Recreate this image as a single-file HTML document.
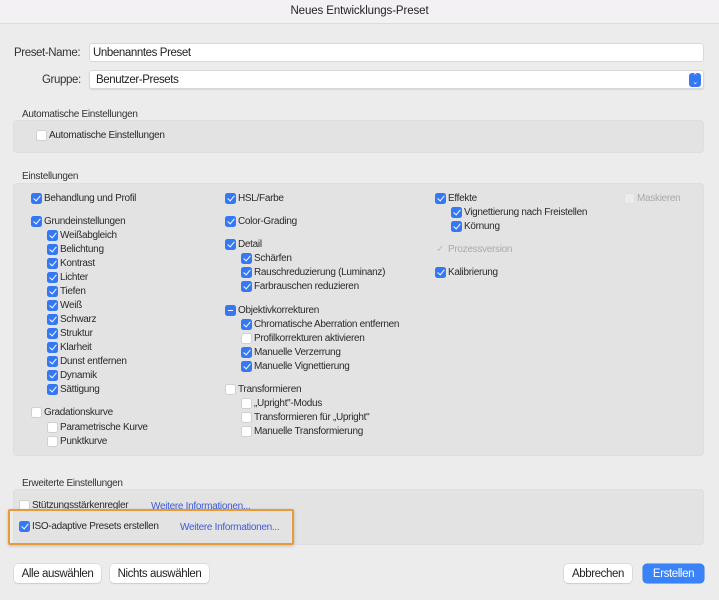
<!DOCTYPE html>
<html><head><meta charset="utf-8"><style>
*{box-sizing:border-box;margin:0;padding:0}
body{width:719px;height:600px;background:#ececec;font-family:"Liberation Sans",sans-serif;font-size:10px;letter-spacing:-0.3px;color:#222;position:relative;overflow:hidden}
.tb{position:absolute;left:0;top:0;width:719px;height:24px;background:#f4f1f4;border-bottom:1px solid #dcdcdc;text-align:center;line-height:23px;font-size:11.5px;letter-spacing:-0.1px;color:#222}
.lbl{position:absolute;font-size:11.5px;letter-spacing:-0.4px;color:#333}
.inp{position:absolute;left:89px;width:615px;height:19px;background:#fff;border:1px solid #d8d8d8;border-radius:3px;font-size:11.5px;letter-spacing:-0.4px;line-height:18px;padding-left:3px;color:#222}
.sec{position:absolute;left:22px;font-size:10px;color:#333}
.pan{position:absolute;left:13px;width:691px;background:#e3e3e3;border:1px solid #dedede;border-radius:4px}
.i{position:absolute;height:16px;line-height:16px;padding-left:13px;white-space:nowrap;color:#2a2a2a}
.i .c{position:absolute;left:0;top:1.5px;width:11px;height:11px;border-radius:2.5px;background:#fff;border:1px solid #d0d0d0}
.i .c.k{background:#3478f6;border-color:#3478f6}
.i .c.k::after{content:"";position:absolute;left:3px;top:0px;width:3px;height:6px;border:solid #fff;border-width:0 1.6px 1.6px 0;transform:rotate(40deg)}
.i .c.m{background:#3478f6;border-color:#3478f6}
.i .c.m::after{content:"";position:absolute;left:2px;top:4px;width:5px;height:1.6px;background:#fff}
.dis{color:#aaa}
.lk{position:absolute;color:#3b5bdb;font-size:10px}
.btn{position:absolute;top:564px;height:19px;background:#fff;border-radius:4px;box-shadow:0 0 0 .5px #c8c8c8,0 1px 1px rgba(0,0,0,.12);font-size:11.5px;letter-spacing:-0.4px;line-height:20px;text-align:center;color:#222}
</style></head><body>
<div class="tb">Neues Entwicklungs-Preset</div>
<div class="lbl" style="left:14px;top:47px">Preset-Name:</div>
<div class="inp" style="top:43px">Unbenanntes Preset</div>
<div class="lbl" style="left:42px;top:74px">Gruppe:</div>
<div class="inp" style="top:70px;box-shadow:0 1px 1px rgba(0,0,0,.1);padding-left:6px">Benutzer-Presets
<div style="position:absolute;right:2px;top:2px;width:12px;height:14px;background:#3478f6;border-radius:3px;color:#fff;font-size:7px;line-height:6px;text-align:center;padding-top:1px">&#8963;<br>&#8964;</div></div>

<div class="sec" style="top:109px">Automatische Einstellungen</div>
<div class="pan" style="top:120px;height:33px"></div>
<div class="i" style="left:36px;top:128px"><span class="c"></span>Automatische Einstellungen</div>

<div class="sec" style="top:171px">Einstellungen</div>
<div class="pan" style="top:183px;height:273px"></div>

<div class="i" style="left:31px;top:191px"><span class="c k"></span>Behandlung und Profil</div>
<div class="i" style="left:31px;top:214px"><span class="c k"></span>Grundeinstellungen</div>
<div class="i" style="left:47px;top:228px"><span class="c k"></span>Weißabgleich</div>
<div class="i" style="left:47px;top:242px"><span class="c k"></span>Belichtung</div>
<div class="i" style="left:47px;top:256px"><span class="c k"></span>Kontrast</div>
<div class="i" style="left:47px;top:270px"><span class="c k"></span>Lichter</div>
<div class="i" style="left:47px;top:284px"><span class="c k"></span>Tiefen</div>
<div class="i" style="left:47px;top:298px"><span class="c k"></span>Weiß</div>
<div class="i" style="left:47px;top:312px"><span class="c k"></span>Schwarz</div>
<div class="i" style="left:47px;top:326px"><span class="c k"></span>Struktur</div>
<div class="i" style="left:47px;top:340px"><span class="c k"></span>Klarheit</div>
<div class="i" style="left:47px;top:354px"><span class="c k"></span>Dunst entfernen</div>
<div class="i" style="left:47px;top:368px"><span class="c k"></span>Dynamik</div>
<div class="i" style="left:47px;top:382px"><span class="c k"></span>Sättigung</div>
<div class="i" style="left:31px;top:405px"><span class="c"></span>Gradationskurve</div>
<div class="i" style="left:47px;top:420px"><span class="c"></span>Parametrische Kurve</div>
<div class="i" style="left:47px;top:434px"><span class="c"></span>Punktkurve</div>

<div class="i" style="left:225px;top:191px"><span class="c k"></span>HSL/Farbe</div>
<div class="i" style="left:225px;top:214px"><span class="c k"></span>Color-Grading</div>
<div class="i" style="left:225px;top:237px"><span class="c k"></span>Detail</div>
<div class="i" style="left:241px;top:251px"><span class="c k"></span>Schärfen</div>
<div class="i" style="left:241px;top:265px"><span class="c k"></span>Rauschreduzierung (Luminanz)</div>
<div class="i" style="left:241px;top:279px"><span class="c k"></span>Farbrauschen reduzieren</div>
<div class="i" style="left:225px;top:303px"><span class="c m"></span>Objektivkorrekturen</div>
<div class="i" style="left:241px;top:317px"><span class="c k"></span>Chromatische Aberration entfernen</div>
<div class="i" style="left:241px;top:331px"><span class="c"></span>Profilkorrekturen aktivieren</div>
<div class="i" style="left:241px;top:345px"><span class="c k"></span>Manuelle Verzerrung</div>
<div class="i" style="left:241px;top:359px"><span class="c k"></span>Manuelle Vignettierung</div>
<div class="i" style="left:225px;top:382px"><span class="c"></span>Transformieren</div>
<div class="i" style="left:241px;top:396px"><span class="c"></span>„Upright"-Modus</div>
<div class="i" style="left:241px;top:410px"><span class="c"></span>Transformieren für „Upright"</div>
<div class="i" style="left:241px;top:424px"><span class="c"></span>Manuelle Transformierung</div>

<div class="i" style="left:435px;top:191px"><span class="c k"></span>Effekte</div>
<div class="i" style="left:451px;top:205px"><span class="c k"></span>Vignettierung nach Freistellen</div>
<div class="i" style="left:451px;top:219px"><span class="c k"></span>Körnung</div>
<div class="i dis" style="left:435px;top:242px"><span style="position:absolute;left:1px;top:0;color:#bbb">✓</span>Prozessversion</div>
<div class="i" style="left:435px;top:265px"><span class="c k"></span>Kalibrierung</div>
<div class="i dis" style="left:624px;top:191px"><span class="c" style="background:#ececec;border-color:#e0e0e0"></span>Maskieren</div>

<div class="sec" style="top:478px">Erweiterte Einstellungen</div>
<div class="pan" style="top:489px;height:56px"></div>
<div class="i" style="left:19px;top:498px"><span class="c"></span>Stützungsstärkenregler</div>
<div class="lk" style="left:151px;top:501px">Weitere Informationen...</div>
<div class="i" style="left:19px;top:519px"><span class="c k"></span>ISO-adaptive Presets erstellen</div>
<div class="lk" style="left:180px;top:522px">Weitere Informationen...</div>
<div style="position:absolute;left:8px;top:509px;width:286px;height:36px;border:2.5px solid #e8993a;border-radius:2px;box-shadow:0 1px 3px rgba(0,0,0,.2)"></div>

<div class="btn" style="left:14px;width:87px">Alle auswählen</div>
<div class="btn" style="left:110px;width:99px">Nichts auswählen</div>
<div class="btn" style="left:564px;width:68px">Abbrechen</div>
<div class="btn" style="left:643px;width:61px;background:#3a82f7;color:#fff;box-shadow:0 0 0 .5px #2f6fe0">Erstellen</div>
</body></html>
